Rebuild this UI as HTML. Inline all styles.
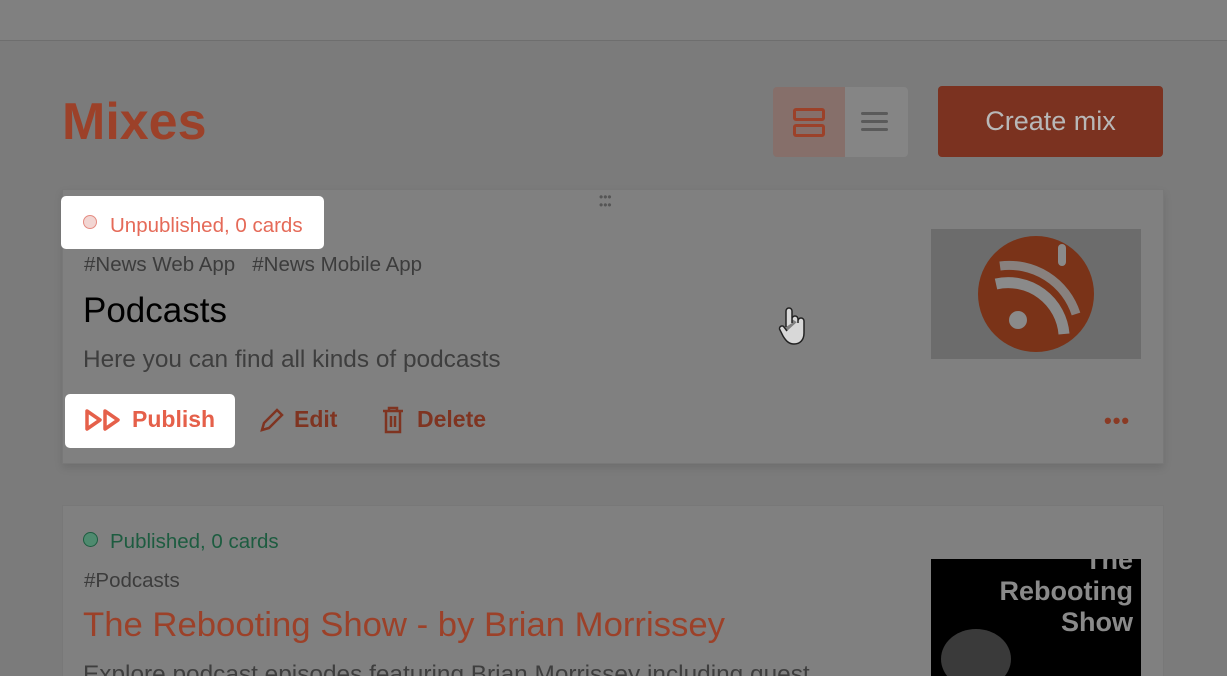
<!DOCTYPE html><html style="overflow:hidden"><head><style>
html,body{margin:0;width:1227px;height:676px;overflow:hidden}
body{background:#7b7b7b;font-family:"Liberation Sans",sans-serif;position:relative}
.a{position:absolute;white-space:nowrap}
</style></head><body>
<div class="a" style="left:0;top:0;width:1227px;height:40px;background:#808080;border-bottom:1px solid #6e6e6e"></div>
<div class="a" style="left:62px;top:92px;font-size:52px;font-weight:bold;color:#9c4129">Mixes</div>
<div class="a" style="left:773px;top:87px;width:72px;height:70px;background:#866f6a;border-radius:4px 0 0 4px"></div>
<div class="a" style="left:845px;top:87px;width:63px;height:70px;background:#858585;border-radius:0 4px 4px 0"></div>
<div class="a" style="left:793px;top:108px;width:32px;height:13px;border:3px solid #9c4129;border-radius:3px;box-sizing:border-box"></div>
<div class="a" style="left:793px;top:124px;width:32px;height:13px;border:3px solid #9c4129;border-radius:3px;box-sizing:border-box"></div>
<div class="a" style="left:861px;top:112px;width:27px;height:3px;background:#5a5a5a;box-shadow:0 8px 0 #5a5a5a,0 16px 0 #5a5a5a;border-radius:2px"></div>
<div class="a" style="left:938px;top:86px;width:225px;height:71px;background:#7b3220;border-radius:4px;color:#b8b8b8;font-size:27px;line-height:71px;text-align:center">Create mix</div>

<div class="a" style="left:62px;top:189px;width:1100px;height:273px;background:#808080;border:1px solid #787878;box-shadow:0 4px 8px rgba(0,0,0,.1)"></div>
<div class="a" style="left:599px;top:193px;font-size:12px;color:#555;line-height:8px">•••<br>•••</div>
<div class="a" style="left:61px;top:196px;width:263px;height:53px;background:#fff;border-radius:5px"></div>
<div class="a" style="left:83px;top:215px;width:14px;height:14px;border-radius:50%;background:#f2d6d3;border:1px solid #e58c82;box-sizing:border-box"></div>
<div class="a" style="left:110px;top:214px;font-size:20.5px;color:#e56a58">Unpublished, 0 cards</div>
<div class="a" style="left:84px;top:253px;font-size:20.5px;color:#3c3c3c">#News Web App &nbsp;&nbsp;#News Mobile App</div>
<div class="a" style="left:83px;top:291px;font-size:35px;color:#000">Podcasts</div>
<div class="a" style="left:83px;top:346px;font-size:24.4px;color:#3e3e3e">Here you can find all kinds of podcasts</div>
<div class="a" style="left:65px;top:394px;width:170px;height:54px;background:#fff;border-radius:5px"></div>
<svg class="a" style="left:84px;top:408px" width="40" height="24"><path d="M3 3L16 12L3 21Z M21 3L34 12L21 21Z" fill="none" stroke="#e5604a" stroke-width="3.5" stroke-linejoin="round"/></svg>
<div class="a" style="left:132px;top:406px;font-size:23px;font-weight:bold;color:#e5604a">Publish</div>
<svg class="a" style="left:258px;top:406px" width="28" height="28"><path d="M4 24L6 17L19 4L24 9L11 22Z" fill="none" stroke="#7f3421" stroke-width="2.5"/></svg>
<div class="a" style="left:294px;top:406px;font-size:23px;font-weight:bold;color:#7f3421">Edit</div>
<svg class="a" style="left:381px;top:406px" width="26" height="28"><path d="M2 5H22M8 5V2H16V5M5 5V26H19V5M10 10V21M14 10V21" fill="none" stroke="#7f3421" stroke-width="2.5"/></svg>
<div class="a" style="left:417px;top:406px;font-size:23px;font-weight:bold;color:#7f3421">Delete</div>
<div class="a" style="left:1104px;top:408px;font-size:22px;font-weight:bold;color:#8a3a24;letter-spacing:1px">•••</div>
<div class="a" style="left:931px;top:229px;width:210px;height:130px;background:#6c6c6c"></div>
<div class="a" style="left:978px;top:236px;width:116px;height:116px;border-radius:50%;background:#7a3318;overflow:hidden">
<svg width="116" height="116"><circle cx="40" cy="84" r="9" fill="#8a8a8a"/><path d="M18 48A56 56 0 0 1 86 98" fill="none" stroke="#8a8a8a" stroke-width="11"/><path d="M22 30A70 70 0 0 1 98 78" fill="none" stroke="#8a8a8a" stroke-width="9" opacity=".9"/><rect x="80" y="8" width="8" height="22" rx="4" fill="#8a8a8a"/></svg></div>
<svg class="a" style="left:776px;top:305px" width="32" height="42"><path d="M10 22V6a3 3 0 0 1 6 0v12 M16 14a3 3 0 0 1 6 0v4 M22 16a3 3 0 0 1 6 0v12c0 7-4 11-10 11c-5 0-8-3-11-8l-3-6a2.5 2.5 0 0 1 4-3l3 4" fill="#d8d8d8" stroke="#222" stroke-width="1.5"/></svg>

<div class="a" style="left:62px;top:505px;width:1100px;height:200px;background:#808080;border:1px solid #787878"></div>
<div class="a" style="left:83px;top:532px;width:15px;height:15px;border-radius:50%;background:#4f8a6f;border:1px solid #1d5c40;box-sizing:border-box"></div>
<div class="a" style="left:110px;top:530px;font-size:20.5px;color:#1d5c40">Published, 0 cards</div>
<div class="a" style="left:84px;top:569px;font-size:20.5px;color:#3c3c3c">#Podcasts</div>
<div class="a" style="left:83px;top:606px;font-size:34.7px;color:#9c4129">The Rebooting Show - by Brian Morrissey</div>
<div class="a" style="left:83px;top:661px;font-size:24.4px;color:#3e3e3e">Explore podcast episodes featuring Brian Morrissey including guest</div>
<div class="a" style="left:931px;top:559px;width:210px;height:120px;background:#000;overflow:hidden">
<div style="position:absolute;right:8px;top:-14px;text-align:right;color:#8a8a8a;font-weight:bold;font-size:27px;line-height:31px">The<br>Rebooting<br>Show</div>
<div style="position:absolute;left:10px;top:70px;width:70px;height:60px;border-radius:50%;background:#3a3a3a"></div></div>
</body></html>
